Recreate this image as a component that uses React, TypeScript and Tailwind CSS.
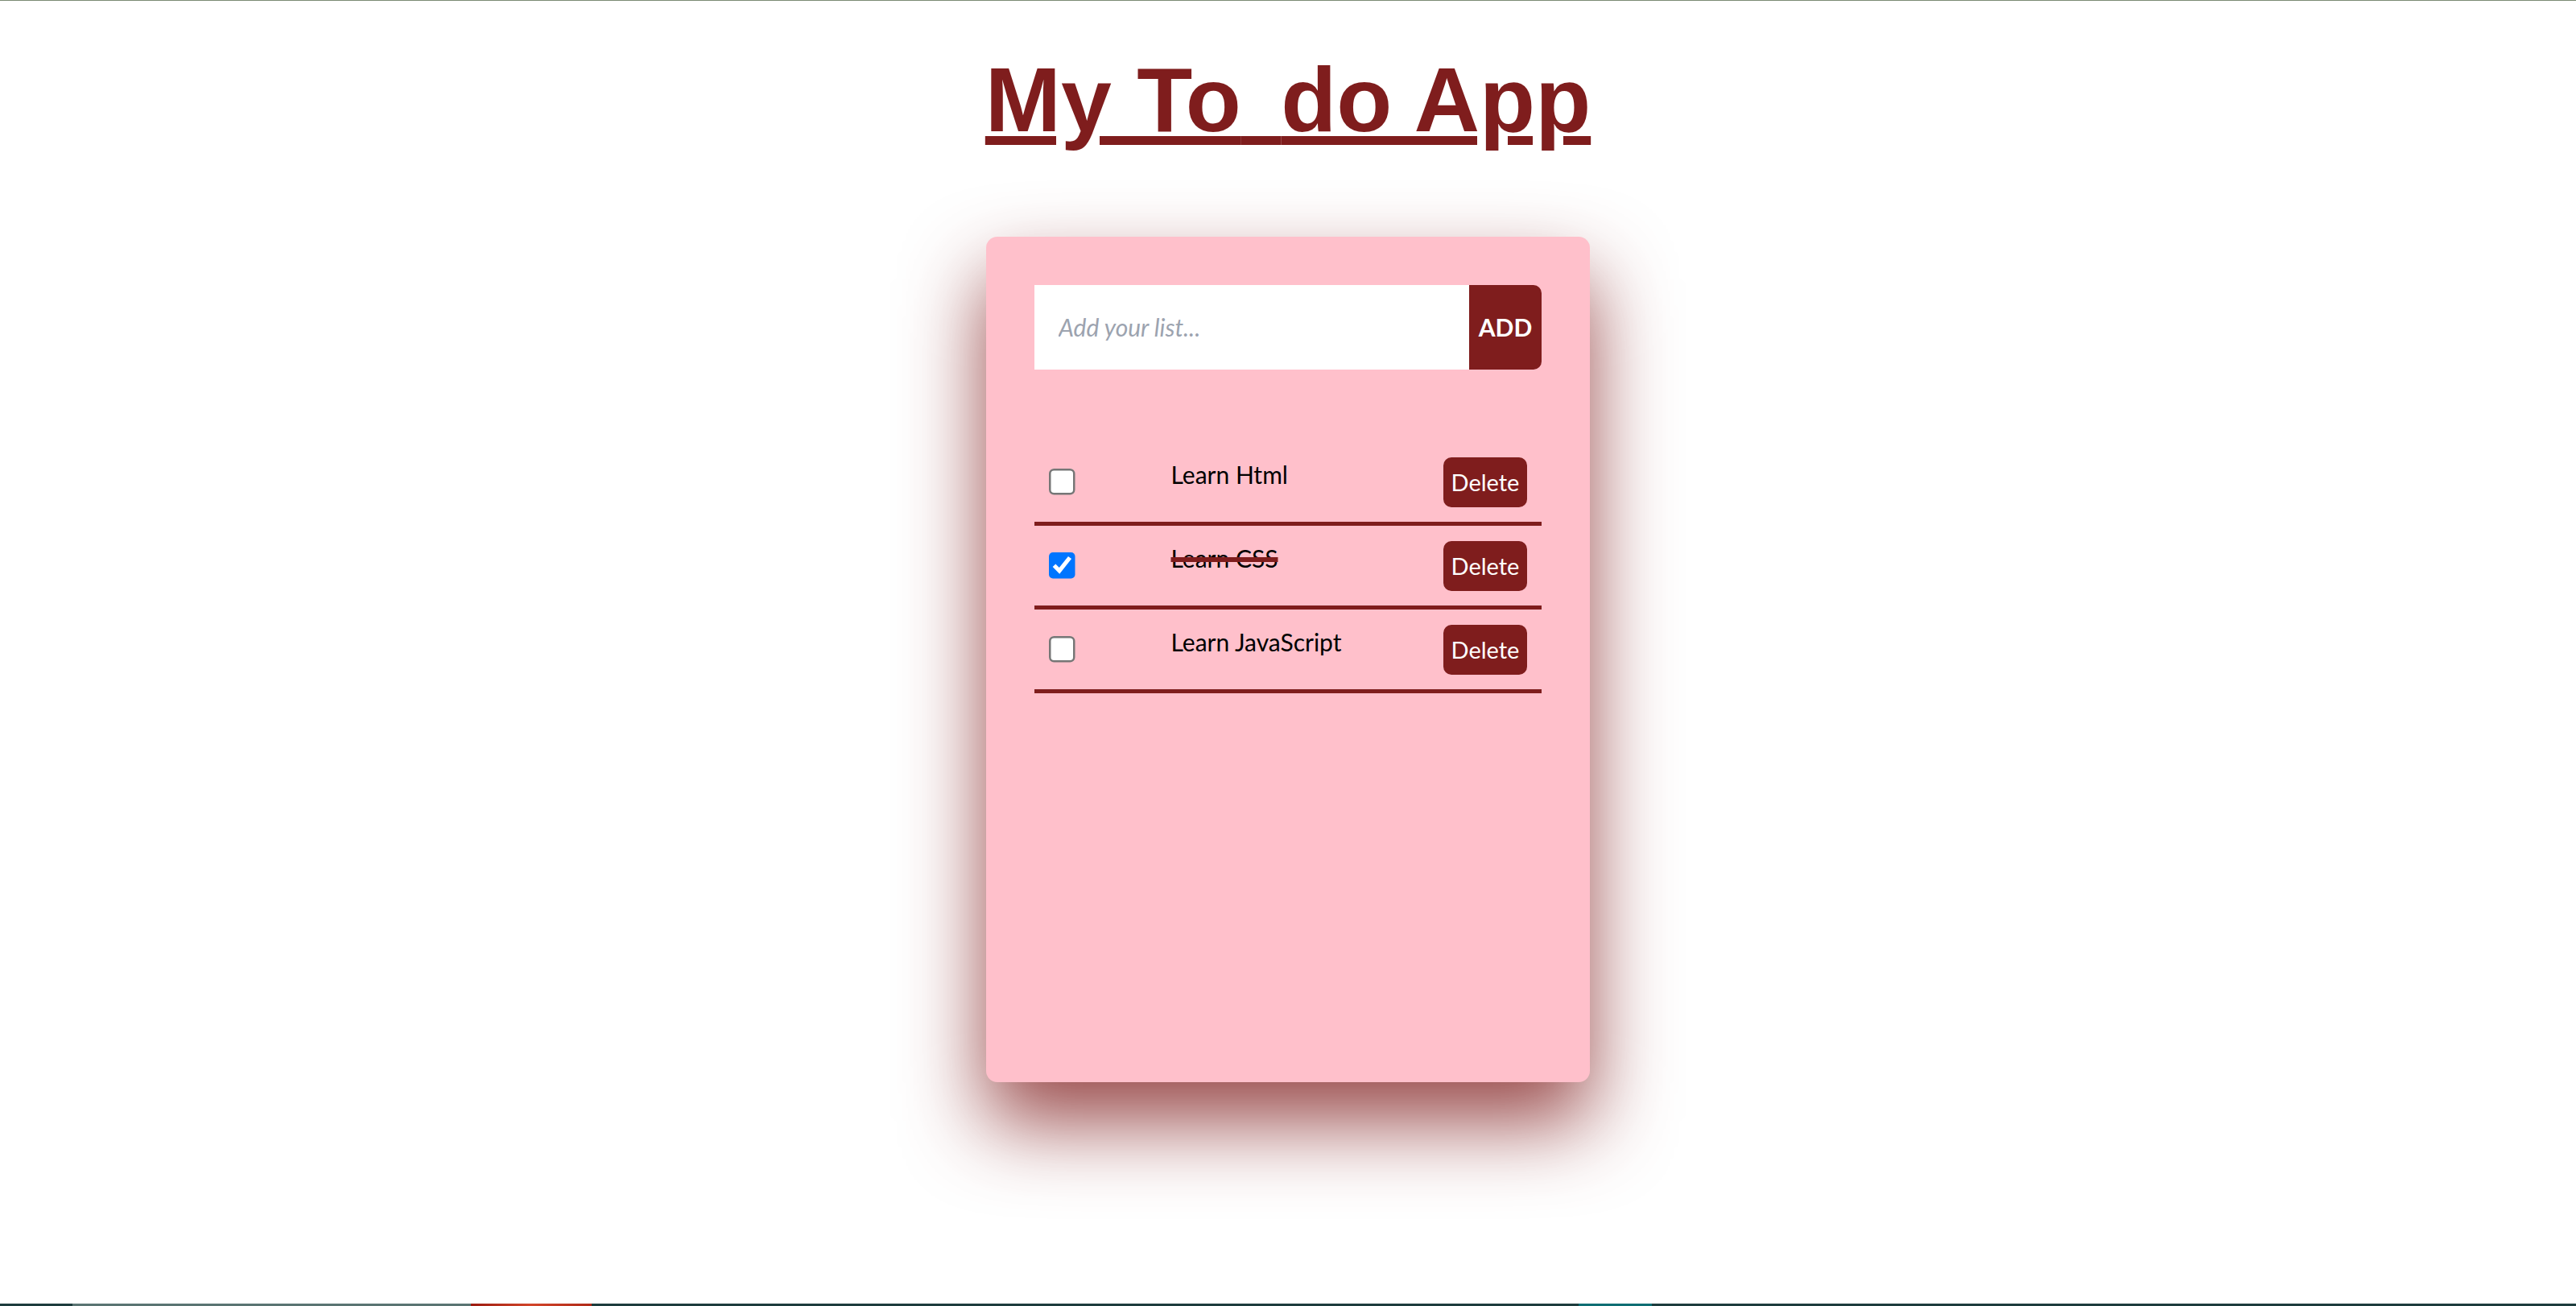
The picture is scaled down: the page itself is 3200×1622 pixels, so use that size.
import React, { useState } from "react";

const START = [
  { id: 1, text: "Learn Html", done: false },
  { id: 2, text: "Learn CSS", done: true },
  { id: 3, text: "Learn JavaScript", done: false },
];

const App = () => {
  const [todos, setTodos] = useState(START);
  const [input, setInput] = useState("");

  const add = () => {
    if (!input.trim()) return;
    setTodos([...todos, { id: Date.now(), text: input, done: false }]);
    setInput("");
  };

  const toggle = (id: number) =>
    setTodos(todos.map((t) => (t.id === id ? { ...t, done: !t.done } : t)));

  const remove = (id: number) => setTodos(todos.filter((t) => t.id !== id));

  return (
    <div className="min-h-screen flex flex-col bg-white border-t border-[#7b8b74] font-['Lato',sans-serif]">
      <div className="flex-1 flex flex-col items-center">
        <h1 className="mt-[58px] text-[113px] font-bold leading-[normal] underline text-[#7f1d1d] font-['Liberation_Sans',Arial,sans-serif]">
          My To<span className="tracking-[18px]"> </span>do App
        </h1>

        <div className="mt-[105px] w-[750px] h-[1050px] bg-[#ffc0cb] rounded-[14px] p-[60px] shadow-[0_50px_100px_rgba(127,29,29,0.8)]">
          <div className="flex h-[105px]">
            <input
              className="flex-1 bg-white pl-[30px] text-[30px] text-black outline-none placeholder:italic placeholder:text-[#9ca3af]"
              placeholder="Add your list..."
              value={input}
              onChange={(e) => setInput(e.target.value)}
            />
            <button
              className="w-[90px] bg-[#7f1d1d] text-white text-[30px] font-bold rounded-r-[10px]"
              onClick={add}
            >
              ADD
            </button>
          </div>

          <ul className="mt-[90px]">
            {todos.map((t) => (
              <li
                key={t.id}
                className="flex items-center h-[104px] border-b-[5px] border-[#7f1d1d]"
              >
                <span className="flex pl-[18px]">
                  <input
                    type="checkbox"
                    className="[zoom:2.5]"
                    checked={t.done}
                    onChange={() => toggle(t.id)}
                  />
                </span>
                <p
                  className={`flex-1 self-start mt-[18px] ml-[119px] text-[30px] leading-[45px] text-black ${t.done ? "line-through decoration-[#7f1d1d] decoration-[6px]" : ""}`}
                >
                  {t.text}
                </p>
                <button
                  className="mr-[18px] w-[104px] h-[62px] rounded-[10px] bg-[#7f1d1d] text-white text-[29px]"
                  onClick={() => remove(t.id)}
                >
                  Delete
                </button>
              </li>
            ))}
          </ul>
        </div>
      </div>

      <div className="flex h-[3px]">
        <div className="w-[90px] bg-[#1d3c3d]" />
        <div className="w-[495px] bg-[#5a7472]" />
        <div className="w-[150px] bg-gradient-to-r from-[#9c1b10] via-[#d2452a] to-[#b02a18]" />
        <div className="w-[1226px] bg-[#1d3c3d]" />
        <div className="w-[91px] bg-[#0e6e73]" />
        <div className="flex-1 bg-[#1d3c3d]" />
      </div>
    </div>
  );
};

export default App;
